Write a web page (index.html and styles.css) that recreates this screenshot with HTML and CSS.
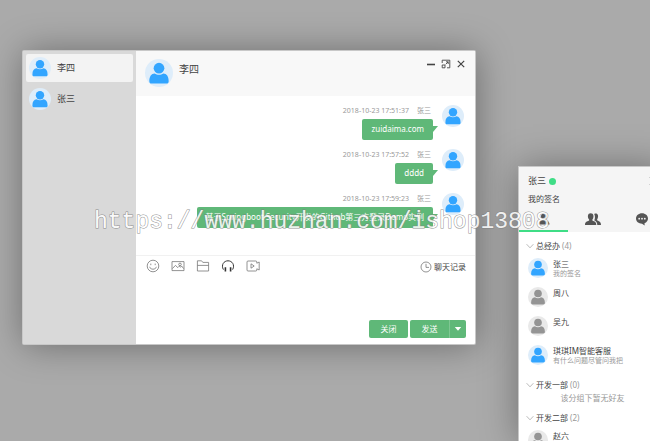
FILE: index.html
```
<!DOCTYPE html>
<html lang="zh">
<head>
  <meta charset="UTF-8">
  <meta name="viewport" content="width=device-width, initial-scale=1.0">
  <title>李四</title>
  <link rel="stylesheet" href="styles.css">
</head>
<body>
  <svg class="defs" width="0" height="0" aria-hidden="true">
    <symbol id="user" viewBox="0 0 22 22">
      <circle class="face-bg" cx="11" cy="11" r="11"/>
      <circle class="face" cx="11" cy="7.2" r="4.2"/>
      <path class="face" d="M3.400 17.400c0-3.900 1.600-5.900 4.200-6.100 1.900 1.400 4.900 1.400 6.800 0 2.600.2 4.200 2.200 4.200 6.100 0 1.300-.6 1.900-1.800 1.900H5.200c-1.200 0-1.800-.6-1.800-1.900z"/>
    </symbol>
    <symbol id="arrow" viewBox="0 0 8 8">
      <path d="M.6 2.2 4 5.8l3.4-3.6" fill="none" stroke="#aaa" stroke-width=".8"/>
    </symbol>
  </svg>

  <main class="desktop">
    <!-- 聊天窗口 -->
    <section class="chat">
      <nav class="chat-list">
        <a href="#lisi" class="chat-item active"><svg class="avatar"><use href="#user"/></svg>李四</a>
        <a href="#zhangsan" class="chat-item"><svg class="avatar"><use href="#user"/></svg>张三</a>
      </nav>
      <div class="chat-box">
        <header class="chat-header">
          <svg class="avatar large"><use href="#user"/></svg>
          <h1>李四</h1>
          <div class="win-btns">
            <button type="button" aria-label="最小化"><svg viewBox="0 0 10 10"><path d="M1 5.5h8" stroke-width="1.6"/></svg></button>
            <button type="button" aria-label="最大化"><svg viewBox="0 0 10 10"><path d="M1.200 4V1.200h7.600v7.600H6M1.200 6h2.800v2.800H1.200zM4.600 5.400l2.600-2.600M5 2.800h2.200V5" stroke-width=".9"/></svg></button>
            <button type="button" aria-label="关闭窗口"><svg viewBox="0 0 10 10"><path d="M1.800 1.800l6.400 6.400M8.200 1.800 1.800 8.200" stroke-width="1.200"/></svg></button>
          </div>
        </header>

        <div class="messages">
          <div class="message">
            <div class="message-body">
              <div class="meta"><time>2018-10-23 17:51:37</time><span>张三</span></div>
              <div class="bubble">zuidaima.com</div>
            </div>
            <svg class="avatar"><use href="#user"/></svg>
          </div>
          <div class="message">
            <div class="message-body">
              <div class="meta"><time>2018-10-23 17:57:52</time><span>张三</span></div>
              <div class="bubble">dddd</div>
            </div>
            <svg class="avatar"><use href="#user"/></svg>
          </div>
          <div class="message">
            <div class="message-body">
              <div class="meta"><time>2018-10-23 17:59:23</time><span>张三</span></div>
              <div class="bubble">基于Springboot Security开发的Github第三方登录Demo实例</div>
            </div>
            <svg class="avatar"><use href="#user"/></svg>
          </div>
        </div>

        <div class="tools">
          <button type="button" aria-label="表情"><svg viewBox="0 0 14 14"><circle cx="7" cy="7" r="5.8"/><path d="M4.800 4.600v1.600M9.200 4.600v1.600M3.600 7.800c.8 3.200 6 3.200 6.800 0"/></svg></button>
          <button type="button" aria-label="图片"><svg viewBox="0 0 14 14"><path d="M1 2.600h12v9H1zM1.400 9.600l3-3.200 2.400 2.200 1.400-1.400 1.400 1 1-1.200 2 2.600"/><circle cx="9" cy="5.400" r="1.300"/></svg></button>
          <button type="button" aria-label="文件"><svg viewBox="0 0 14 14"><path d="M1.400 12V1.800h4.200l1.200 1.600h5.800V12zM1.400 6.400h11.200"/></svg></button>
          <button type="button" aria-label="音乐"><svg class="dark" viewBox="0 0 14 14"><path d="M2.400 10.600C-.2 5.800 3 1.800 7 1.800s7.200 4 4.600 8.800"/><path d="M4.400 8.200v4.200M9.600 8.200v4.200" stroke-width="1.600"/></svg></button>
          <button type="button" aria-label="视频"><svg viewBox="0 0 14 14"><path d="M2 2h7.800q1 0 1 1v1.200L13.200 3v8l-2.400-1.200V11q0 1-1 1H2q-1 0-1-1V3q0-1 1-1zM5 4.800v4.400L8.200 7z"/></svg></button>
          <a href="#log" class="log"><svg viewBox="0 0 12 12"><circle cx="6" cy="6" r="5"/><path d="M6 2.800V6.400h3"/></svg>聊天记录</a>
        </div>
        <textarea class="editor" aria-label="消息内容"></textarea>
        <footer class="chat-footer">
          <button type="button" class="btn">关闭</button>
          <div class="send">
            <button type="button" class="btn">发送</button>
            <button type="button" class="btn more" aria-label="发送设置"><svg viewBox="0 0 8 6"><path d="M.8 1h6.400L4 4.800z" fill="#fff"/></svg></button>
          </div>
        </footer>
      </div>
    </section>

    <!-- 好友面板 -->
    <section class="panel">
      <header class="panel-header">
        <div class="me">
          <strong>张三</strong><i class="online"></i>
          <button type="button" aria-label="关闭面板"><svg viewBox="0 0 10 10"><path d="M1.800 1.800l6.400 6.400M8.200 1.800 1.800 8.200"/></svg></button>
        </div>
        <p class="sign">我的签名</p>
        <nav class="tabs">
          <button type="button" class="active" aria-label="好友"><svg viewBox="0 0 16 16"><circle cx="8" cy="5.500" r="3"/><path d="M2.500 13.500c0-3 2-3.500 4.500-4.500h2c2.500 1 4.500 1.500 4.500 4.500z"/></svg></button>
          <button type="button" aria-label="群组"><svg viewBox="0 0 16 16"><path d="M0 14c0-3 1.800-3.300 4-4.400.4-.4.300-1-.3-1.700C2.400 6 2.500 2.200 5.700 2.200S9 6 7.800 7.900c-.6.7-.7 1.300-.3 1.700 2.200 1.100 3.800 1.400 3.800 4.400z"/><path d="M9.200 2.900c3.400-1.300 4.800 1.700 3.300 4.900-.5.800-.6 1.300 0 1.700 1.900 1 3.500 1.300 3.500 4.500h-3.700c0-2.800-1.300-3.800-3.100-4.700C10.200 7.400 10.200 5 9.200 2.900z"/></svg></button>
          <button type="button" aria-label="消息"><svg viewBox="0 0 16 16"><path d="M8 2.300c-3.400 0-6 2.300-6 5.300 0 2.900 2.600 5.200 6 5.200l2.700 1.600-.2-2.100C12.700 11.500 14 9.700 14 7.600c0-3-2.600-5.300-6-5.300z"/><g fill="#f5f5f5"><circle cx="5.200" cy="7.700" r=".9"/><circle cx="8" cy="7.700" r=".9"/><circle cx="10.800" cy="7.700" r=".9"/></g></svg></button>
        </nav>
      </header>

      <div class="groups">
        <h2><svg><use href="#arrow"/></svg>总经办 <em>(4)</em></h2>
        <ul>
          <li><svg class="avatar small"><use href="#user"/></svg><div><span>张三</span><p>我的签名</p></div></li>
          <li><svg class="avatar small offline"><use href="#user"/></svg><div><span>周八</span></div></li>
          <li><svg class="avatar small offline"><use href="#user"/></svg><div><span>吴九</span></div></li>
          <li><svg class="avatar small"><use href="#user"/></svg><div><span>琪琪IM智能客服</span><p>有什么问题尽管问我把</p></div></li>
        </ul>
        <h2><svg><use href="#arrow"/></svg>开发一部 <em>(0)</em></h2>
        <p class="empty">该分组下暂无好友</p>
        <h2><svg><use href="#arrow"/></svg>开发二部 <em>(2)</em></h2>
        <ul>
          <li><svg class="avatar small offline"><use href="#user"/></svg><div><span>赵六</span></div></li>
        </ul>
      </div>
    </section>

    <div class="watermark">https://www.huzhan.com/ishop13808</div>
  </main>
</body>
</html>
```

FILE: styles.css
```
* {
  box-sizing: border-box;
}
body {
  margin: 0;
  font-family: "Noto Sans", "Noto Sans CJK SC", sans-serif;
  font-size: 8px;
  line-height: 12px;
  color: #444;
  background: #aaa;
}
h1, h2, p, ul {
  margin: 0;
  padding: 0;
  font-weight: normal;
}
a {
  color: inherit;
  text-decoration: none;
}
button {
  padding: 0;
  border: none;
  background: none;
  font: inherit;
  color: inherit;
  cursor: pointer;
}
svg {
  display: block;
  flex: none;
}
.defs {
  position: absolute;
}
.desktop {
  position: relative;
  height: 100vh;
  overflow: hidden;
}

/* 头像 */
.avatar {
  width: 22px;
  height: 22px;
  --bg: #deedfa;
  --fg: #32a5ff;
}
.avatar.large {
  width: 28px;
  height: 28px;
}
.avatar.small {
  width: 20px;
  height: 20px;
}
.avatar.offline {
  --bg: #e9e9e9;
  --fg: #949494;
}
.face-bg {
  fill: var(--bg);
}
.face {
  fill: var(--fg);
}

/* 聊天窗口 */
.chat {
  position: absolute;
  left: 23px;
  top: 51px;
  width: 452px;
  display: flex;
  background: #fff;
  border-radius: 1px;
  box-shadow: 0 0 0 1px #c8c8c8, 1px 1px 36px rgba(0, 0, 0, 0.38);
}
.chat-list {
  width: 113px;
  padding: 3px;
  background: #d9d9d9;
}
.chat-item {
  display: flex;
  align-items: center;
  gap: 6px;
  height: 28px;
  margin-bottom: 3px;
  padding: 0 3px;
  border-radius: 2px;
  font-size: 9px;
}
.chat-item.active {
  background: #f3f3f3;
}
.chat-box {
  flex: 1;
  min-width: 0;
}
.chat-header {
  display: flex;
  gap: 6px;
  height: 45px;
  padding: 8px 9px 0;
  background: #f8f8f8;
}
.chat-header h1 {
  flex: 1;
  padding-top: 4px;
  font-size: 10px;
}
.win-btns {
  display: flex;
  align-items: flex-start;
  gap: 5px;
}
.win-btns svg, .me svg {
  width: 10px;
  height: 10px;
  fill: none;
  stroke: #444;
}
.messages {
  height: 159px;
  padding: 9px 11px;
}
.message {
  display: flex;
  justify-content: flex-end;
  gap: 9px;
  height: 44px;
}
.message-body {
  display: flex;
  flex-direction: column;
  align-items: flex-end;
  gap: 2px;
}
.meta {
  display: flex;
  gap: 8px;
  padding-right: 2px;
  font-size: 7px;
  color: #999;
}
.bubble {
  position: relative;
  padding: 4px 9px 5px;
  border-radius: 2px;
  background: #5fb878;
  color: #fff;
  white-space: nowrap;
}
.bubble::after {
  content: "";
  position: absolute;
  left: 100%;
  top: 7px;
  border-top: 6px solid #5fb878;
  border-right: 5px solid transparent;
}
.tools {
  display: flex;
  align-items: flex-start;
  gap: 11px;
  height: 22px;
  padding: 3px 9px 0 10px;
  border-top: 1px solid #f1f1f1;
}
.tools svg {
  width: 14px;
  height: 14px;
  fill: none;
  stroke: #777;
  stroke-width: 0.8;
}
.tools .dark {
  stroke: #333;
  stroke-width: 1;
}
.log {
  display: flex;
  align-items: center;
  gap: 2px;
  margin-left: auto;
  padding-top: 2px;
}
.log svg {
  width: 12px;
  height: 12px;
}
.editor {
  display: block;
  width: 100%;
  height: 42px;
  padding: 4px 10px;
  border: none;
  outline: none;
  resize: none;
  font: inherit;
}
.chat-footer {
  display: flex;
  justify-content: flex-end;
  gap: 2px;
  padding: 1px 9px 6px;
}
.btn {
  width: 39px;
  height: 18px;
  border-radius: 2px;
  background: #5fb878;
  color: #fff;
}
.send {
  display: flex;
  overflow: hidden;
  border-radius: 2px;
}
.send .btn {
  border-radius: 0;
}
.send .more {
  display: grid;
  place-items: center;
  width: 17px;
  border-left: 1px solid #7fc793;
}
.more svg {
  width: 8px;
  height: 6px;
}

/* 好友面板 */
.panel {
  position: absolute;
  left: 519px;
  top: 167px;
  bottom: 0;
  width: 147px;
  background: #fff;
  box-shadow: 0 0 0 1px #c8c8c8, 1px 1px 36px rgba(0, 0, 0, 0.38);
}
.panel-header {
  padding-top: 8px;
  background: #f5f5f5;
}
.me {
  display: flex;
  align-items: center;
  gap: 3px;
  padding: 0 8px 0 9px;
}
.me strong {
  font-size: 9px;
  font-weight: normal;
}
.me button {
  margin-left: auto;
}
.online {
  width: 7px;
  height: 7px;
  border-radius: 50%;
  background: #3fdd86;
}
.sign {
  padding: 6px 9px 0;
}
.tabs {
  display: flex;
  margin-top: 3px;
}
.tabs button {
  display: grid;
  place-items: center;
  flex: 1;
  height: 24px;
  border-bottom: 2px solid transparent;
}
.tabs .active {
  border-color: #3fdd86;
}
.tabs svg {
  width: 16px;
  height: 16px;
  fill: #555;
}
.groups {
  padding: 6px 7px 0;
}
.groups h2 {
  display: flex;
  align-items: center;
  gap: 2px;
  height: 16px;
  font-size: 8px;
}
.groups h2 svg {
  width: 8px;
  height: 8px;
}
.groups em {
  font-style: normal;
  color: #999;
}
.groups ul {
  padding: 4px 2px 3px;
  list-style: none;
}
.groups li {
  display: flex;
  gap: 5px;
  height: 29px;
}
.groups li p {
  margin-top: -2px;
  font-size: 7px;
  color: #999;
}
.groups .empty {
  height: 17px;
  line-height: 10px;
  text-align: center;
  color: #999;
}

.watermark {
  position: absolute;
  left: 94px;
  top: 208px;
  font: 23px/28px "Liberation Mono", monospace;
  color: #fff;
  -webkit-text-stroke: 1px #808080;
  paint-order: stroke fill;
  opacity: 0.85;
  pointer-events: none;
}
```
